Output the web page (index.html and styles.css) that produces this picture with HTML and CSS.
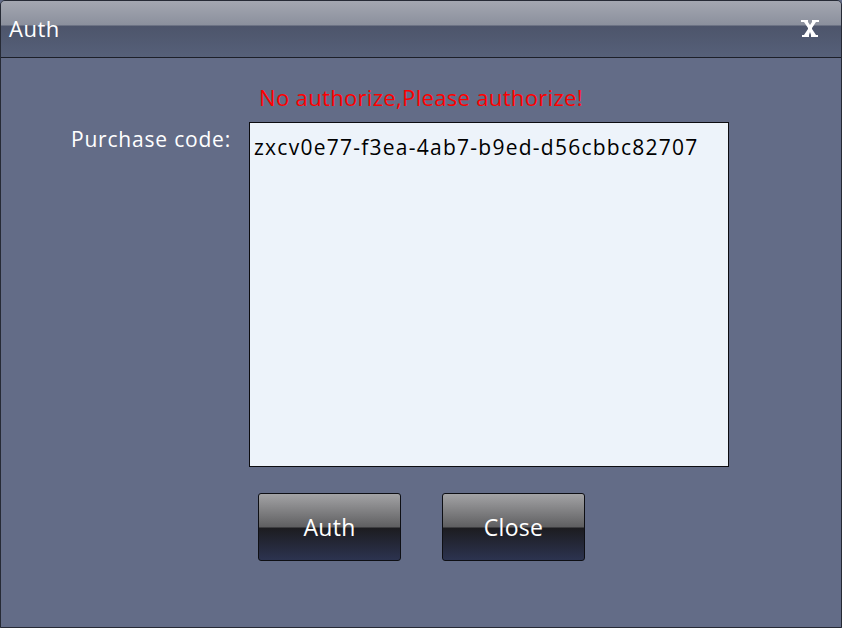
FILE: index.html
```html
<!DOCTYPE html>
<html>
<head>
<meta charset="utf-8">
<link rel="stylesheet" href="styles.css">
</head>
<body>
<div class="window">
  <div class="titlebar">
    <span class="title">Auth</span>
    <svg class="close-x" width="20" height="18" viewBox="0 0 20 18">
      <polygon fill="#ffffff" points="1,0 8,0 8,2 10,5 12,2 12,0 19,0 19,2 16,2 12,8 12,9 16,15 18,15 18,17 11,17 11,15 10,12 9,15 9,17 2,17 2,15 4,15 8,9 8,8 4,2 1,2"/>
    </svg>
  </div>
  <div class="content">
    <div class="error">No authorize,Please authorize!</div>
    <div class="form">
      <div class="label">Purchase code:</div>
      <div class="codebox">zxcv0e77-f3ea-4ab7-b9ed-d56cbbc82707</div>
    </div>
    <div class="buttons">
      <button class="btn">Auth</button>
      <button class="btn">Close</button>
    </div>
  </div>
</div>
</body>
</html>
```
FILE: styles.css
```css
html, body {
  margin: 0;
  padding: 0;
  background: #636c87;
}
.window {
  width: 842px;
  height: 628px;
  box-sizing: border-box;
  border: 1px solid #262a35;
  border-radius: 5px 5px 0 0;
  background: #636c87;
  display: flex;
  flex-direction: column;
  overflow: hidden;
  font-family: "Open Sans", "Noto Sans", sans-serif;
}
.titlebar {
  height: 56px;
  flex: none;
  border-bottom: 1px solid #1c1f28;
  background: linear-gradient(to bottom, #a4a7b1 0px, #8b909d 24px, #4d556b 25px, #566079 56px);
  display: flex;
  align-items: center;
  justify-content: space-between;
  padding: 0 21px 0 8px;
}
.title {
  color: #ffffff;
  font-size: 22px;
  letter-spacing: 0.5px;
  margin-top: -2px;
}
.close-x {
  margin-top: -1px;
  display: block;
}
.content {
  flex: 1;
  display: flex;
  flex-direction: column;
  align-items: flex-start;
}
.error {
  align-self: center;
  color: #ff0000;
  font-size: 22px;
  letter-spacing: 0.33px;
  margin-top: 24px;
  line-height: 30px;
}
.form {
  display: grid;
  grid-template-columns: 230px 480px;
  column-gap: 18px;
  margin-top: 10px;
}
.label {
  color: #ffffff;
  font-size: 21px;
  letter-spacing: 0.8px;
  text-align: right;
  line-height: 28px;
  margin-top: 3px;
}
.codebox {
  height: 345px;
  box-sizing: border-box;
  border: 1px solid #0c0c10;
  background: #edf3fa;
  color: #000000;
  font-size: 21px;
  letter-spacing: 1.25px;
  line-height: 28px;
  padding: 10px 4px;
}
.buttons {
  display: flex;
  gap: 41px;
  margin-top: 26px;
  margin-left: 257px;
}
.btn {
  width: 143px;
  height: 68px;
  border: 1px solid #0e0f14;
  border-radius: 3px;
  background: linear-gradient(to bottom, #a3a3a5 0px, #5f5f61 33px, #1c1c20 34px, #2d3451 67px);
  color: #ffffff;
  font-family: "Open Sans", "Noto Sans", sans-serif;
  font-size: 23px;
  letter-spacing: 0.3px;
  padding: 0;
}
```
